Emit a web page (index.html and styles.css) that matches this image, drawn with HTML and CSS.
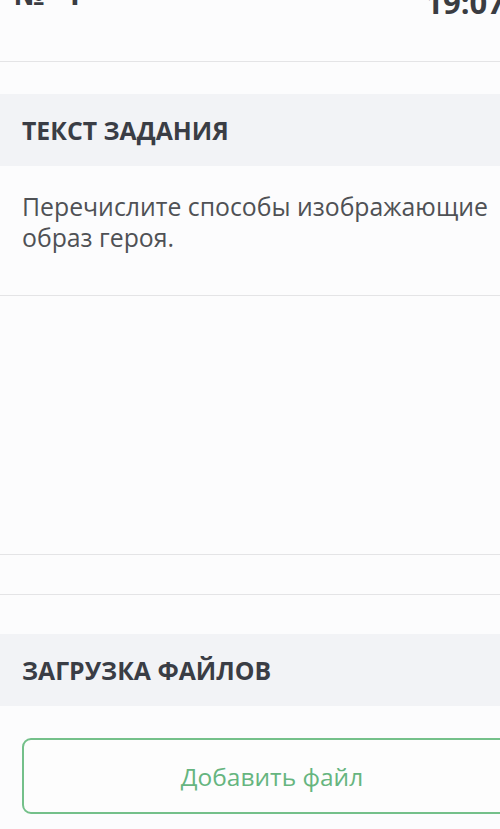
FILE: index.html
```html
<!DOCTYPE html>
<html lang="ru">
<head>
<meta charset="utf-8">
<link rel="stylesheet" href="styles.css">
</head>
<body>
<div class="page">
  <header class="top">
    <div class="top-row">
      <span class="num">№ 1</span>
      <span class="time">19:07</span>
    </div>
  </header>
  <section class="block">
    <div class="band"><h2 class="band-title">ТЕКСТ ЗАДАНИЯ</h2></div>
    <p class="task-text">Перечислите способы изображающие образ героя.</p>
  </section>
  <div class="answer-area"></div>
  <div class="gap-strip"></div>
  <section class="block upload">
    <div class="band"><h2 class="band-title">ЗАГРУЗКА ФАЙЛОВ</h2></div>
    <div class="upload-body">
      <button class="add-btn" type="button">Добавить файл</button>
    </div>
  </section>
</div>
</body>
</html>
```
FILE: styles.css
```css
html, body {
  margin: 0;
  padding: 0;
  background: #fcfcfd;
  overflow: hidden;
}
body {
  font-family: "Open Sans", "Noto Sans", sans-serif;
  width: 500px;
  height: 829px;
}
.page {
  width: 500px;
  overflow: hidden;
}
.top {
  height: 61px;
  border-bottom: 1.5px solid #e4e4e6;
  overflow: hidden;
}
.top-row {
  display: flex;
  justify-content: space-between;
  align-items: flex-start;
  margin-top: -25px;
  padding-left: 14px;
  margin-right: -5px;
  font-weight: 700;
  color: #3a3c42;
  font-size: 30px;
  line-height: 40px;
}
.num {
  margin-top: -1px;
  word-spacing: 12px;
}
.time {
  font-size: 31px;
  margin-top: 7px;
}
.block {
  margin-top: 32px;
}
.band {
  background: #f2f3f6;
  height: 72px;
  display: flex;
  align-items: center;
  padding-left: 22px;
}
.band-title {
  margin: 0;
  font-size: 24.8px;
  font-weight: 700;
  color: #3a3d45;
  letter-spacing: 0;
}
.task-text {
  margin: 0;
  padding: 25px 0 42px 22px;
  font-size: 24.8px;
  line-height: 31px;
  color: #4f5155;
  border-bottom: 1.5px solid #e4e4e6;
}
.answer-area {
  height: 258px;
  border-bottom: 1.5px solid #e4e4e6;
}
.gap-strip {
  height: 39px;
  border-bottom: 1.5px solid #e4e4e6;
}
.upload {
  margin-top: 39px;
}
.upload-body {
  padding: 32px 0 0 22px;
}
.add-btn {
  box-sizing: border-box;
  width: 500px;
  height: 76px;
  border: 2px solid #74c08a;
  border-radius: 9px;
  background: #fdfdfd;
  color: #66b57f;
  font-family: "Open Sans", "Noto Sans", sans-serif;
  font-size: 24.5px;
  padding: 0;
  display: flex;
  align-items: center;
  justify-content: center;
}
```
